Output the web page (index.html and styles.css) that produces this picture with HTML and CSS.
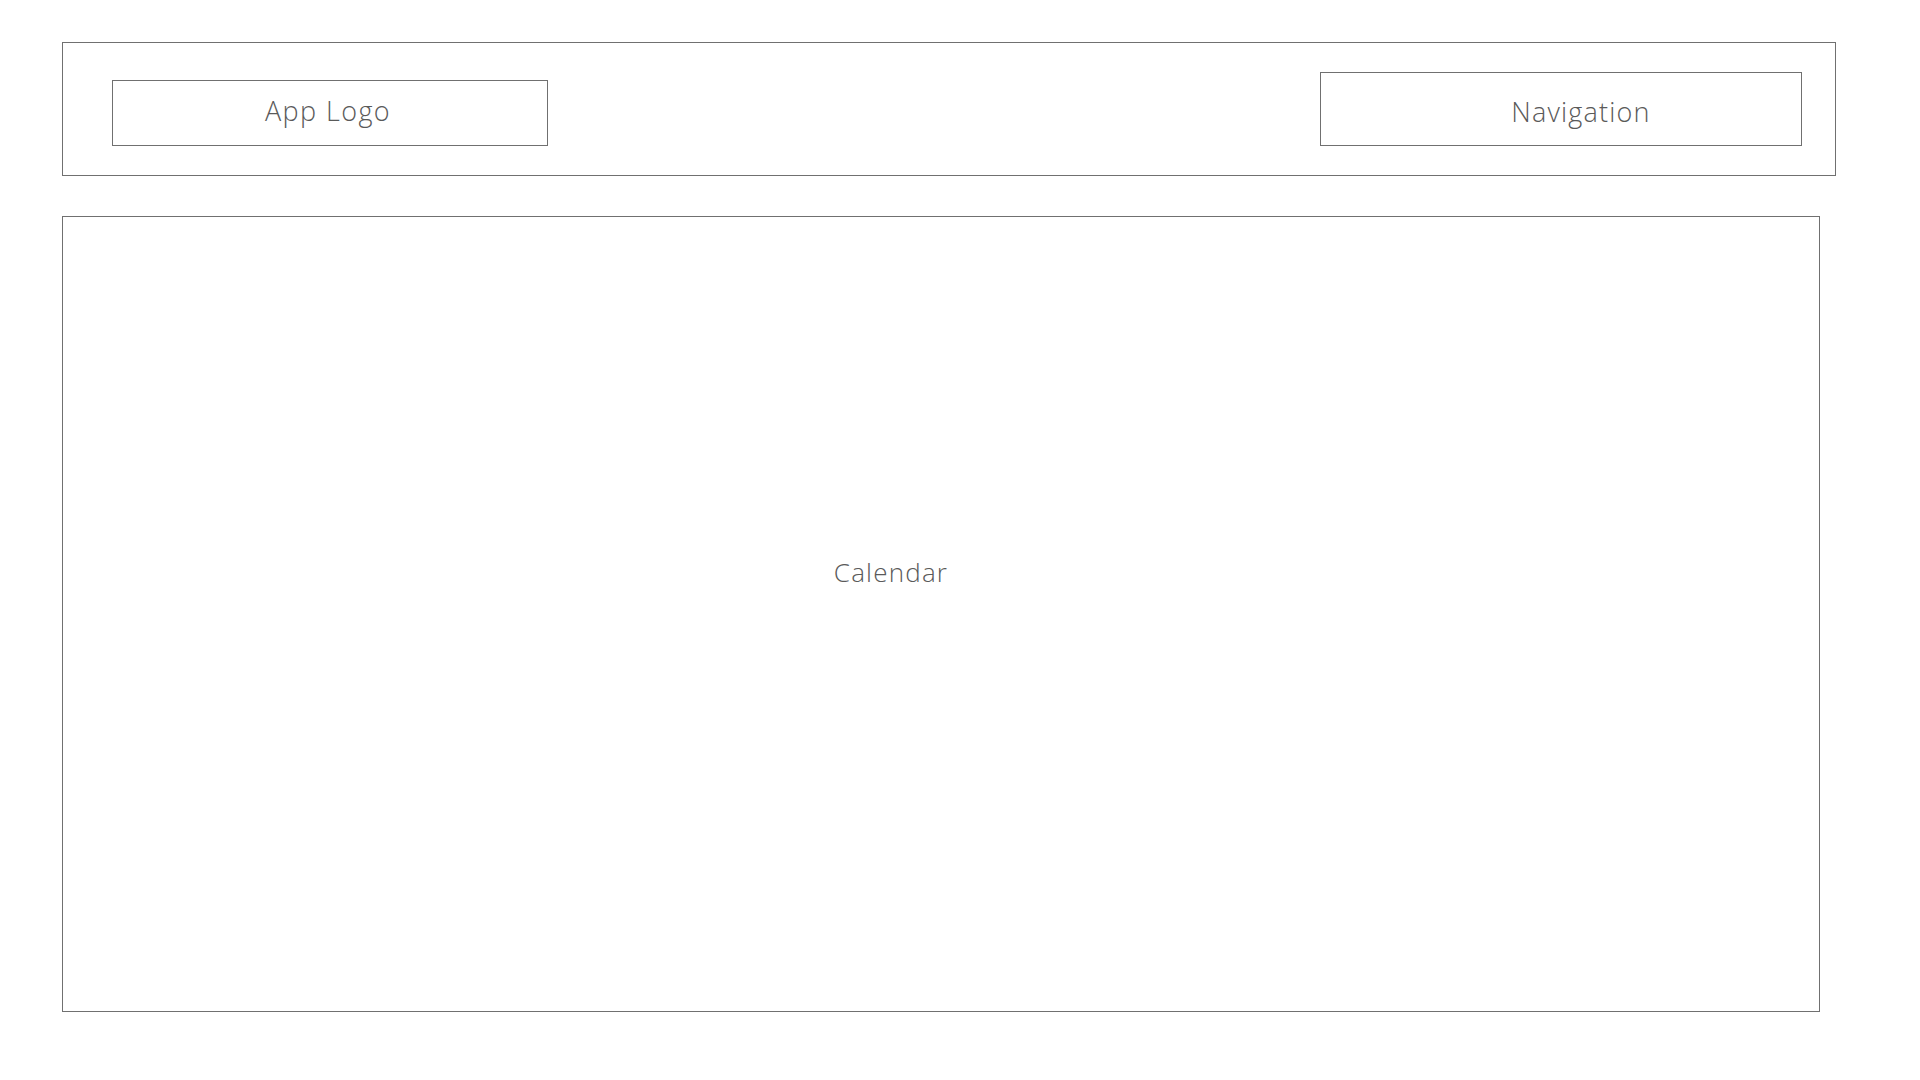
FILE: index.html
```html
<!DOCTYPE html>
<html lang="en">
<head>
<meta charset="utf-8">
<title>Calendar App</title>
<link rel="stylesheet" href="styles.css">
</head>
<body>
<div class="page">
  <header class="header">
    <div class="logo">App Logo</div>
    <nav class="nav">Navigation</nav>
  </header>
  <main class="calendar">
    <span class="calendar-label">Calendar</span>
  </main>
</div>
</body>
</html>
```

FILE: styles.css
```css
* { box-sizing: border-box; }
html, body {
  margin: 0;
  padding: 0;
  background: #ffffff;
}
body {
  font-family: "Open Sans", "Noto Sans", sans-serif;
  font-weight: 300;
  color: #5a5a5a;
}
.page {
  padding: 42px 0 0 62px;
}
.header {
  width: 1774px;
  height: 134px;
  border: 1px solid #707070;
  padding: 29px 33px 29px 49px;
  display: flex;
  align-items: flex-end;
  justify-content: space-between;
}
.logo {
  width: 436px;
  height: 66px;
  border: 1px solid #707070;
  display: flex;
  align-items: center;
  justify-content: center;
  padding: 0 4px 5px 0;
  font-size: 27px;
  letter-spacing: 1.4px;
}
.nav {
  width: 482px;
  height: 74px;
  border: 1px solid #707070;
  display: flex;
  align-items: center;
  justify-content: center;
  padding: 5px 0 0 40px;
  font-size: 27px;
  letter-spacing: 1.2px;
}
.calendar {
  margin-top: 40px;
  width: 1758px;
  height: 796px;
  border: 1px solid #707070;
  display: flex;
  align-items: center;
  justify-content: center;
  padding: 0 100px 85px 0;
  font-size: 26px;
  letter-spacing: 1.2px;
}
```
